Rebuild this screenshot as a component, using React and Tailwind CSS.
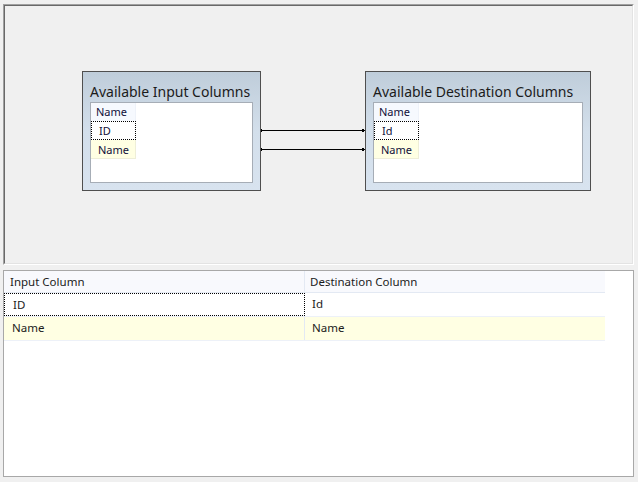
import React from "react";

const font = { fontFamily: '"Noto Sans", "Open Sans", sans-serif' };

function ColumnBox({ title, width, rows }) {
  return (
    <div
      className="flex flex-col border border-[#4f4f4f] bg-gradient-to-b from-[#bfcdda] via-[#d3dfeb] to-[#d8e3ef] px-[7px] pb-[7px]"
      style={{ width }}
    >
      <div className="h-[30px] flex items-end pb-[3px] text-[14px] leading-none text-[#1b1b1b] whitespace-nowrap">
        {title}
      </div>
      <div className="h-[81px] border border-[#a6adb6] bg-white">
        <div className="w-[45px] h-[18px] bg-[#f6f9fe] border-r border-[#eef2f9] pl-[5px] text-[11px] leading-[18px] text-[#10103a]">
          Name
        </div>
        <div className="w-[45px] h-[19px] border border-dotted border-black pl-[7px] text-[11px] leading-[17px] text-[#10103a]">
          {rows[0]}
        </div>
        <div className="w-[45px] h-[19px] bg-[#ffffe3] border-r border-b border-[#eeeed8] pl-[7px] text-[11px] leading-[19px] text-[#10103a]">
          {rows[1]}
        </div>
      </div>
    </div>
  );
}

function Links() {
  return (
    <svg width="104" height="120" className="block" shapeRendering="crispEdges">
      <rect x="0" y="58" width="1" height="3" fill="#000" />
      <rect x="0" y="59" width="104" height="1" fill="#000" />
      <rect x="101" y="58" width="2" height="3" fill="#000" />
      <rect x="0" y="77" width="1" height="3" fill="#000" />
      <rect x="0" y="78" width="104" height="1" fill="#000" />
      <rect x="101" y="77" width="2" height="3" fill="#000" />
    </svg>
  );
}

export default function App() {
  const mappings = [
    { input: "ID", dest: "Id", focus: true },
    { input: "Name", dest: "Name", focus: false },
  ];

  return (
    <div className="w-[638px] h-[482px] bg-[#f0f0f0] pt-[4px] pl-[3px] overflow-hidden" style={font}>
      <div className="w-[631px] h-[261px] border-t border-l border-[#a0a0a0] border-r border-b border-r-white border-b-white">
        <div className="h-full border-t border-l border-[#696969] border-r border-b border-r-[#e3e3e3] border-b-[#e3e3e3] pt-[65px] pl-[77px]">
          <div className="flex items-start">
            <ColumnBox title="Available Input Columns" width={179} rows={["ID", "Name"]} />
            <Links />
            <ColumnBox title="Available Destination Columns" width={226} rows={["Id", "Name"]} />
          </div>
        </div>
      </div>

      <div className="mt-[5px] w-[631px] h-[207px] border border-[#a8a8a8] bg-white text-[11.5px] text-[#1b1b1b]">
        <div className="flex w-[601px] h-[22px] bg-[#f8f9fd] border-b border-[#e3e9f3]">
          <div className="w-[301px] border-r border-[#e3e9f3] pl-[6px] leading-[21px]">Input Column</div>
          <div className="flex-1 pl-[5px] leading-[21px]">Destination Column</div>
        </div>
        {mappings.map((m) => (
          <div
            key={m.input}
            className={`flex w-[601px] h-[24px] border-b border-[#edf1f8] ${m.focus ? "bg-white" : "bg-[#ffffe3]"}`}
          >
            <div
              className={`w-[301px] pl-[8px] leading-[22px] ${m.focus ? "border border-dotted border-black" : "border-r border-[#e3e9f3]"}`}
            >
              {m.input}
            </div>
            <div className="flex-1 pl-[7px] leading-[22px]">{m.dest}</div>
          </div>
        ))}
      </div>
    </div>
  );
}
